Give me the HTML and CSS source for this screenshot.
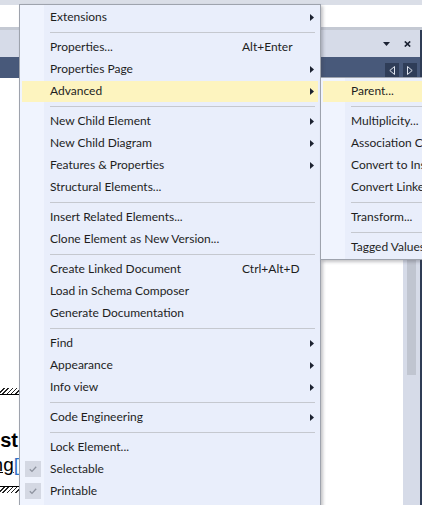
FILE: index.html
```html
<!DOCTYPE html>
<html>
<head>
<meta charset="utf-8">
<link rel="stylesheet" href="styles.css">
</head>
<body>
<div class="app">
  <div class="topband"></div>
  <div class="toolbar"></div>
  <div class="rule"></div>
  <div class="tabhead">
    <svg class="hico" width="7" height="4" viewBox="0 0 7 4"><path d="M0 0H7L3.5 4Z" fill="#1b2233"/></svg>
    <svg class="hico" width="7" height="6" viewBox="0 0 7 6"><path d="M0.8 0.5L6.2 5.5M6.2 0.5L0.8 5.5" stroke="#1b2233" stroke-width="1.7"/></svg>
  </div>
  <div class="navbar">
    <span class="nbtn"><svg width="6" height="9" viewBox="0 0 6 9"><path d="M5.5 0.5V8.5L0.8 4.5Z" fill="none" stroke="#dfe4ee" stroke-width="1"/></svg></span>
    <span class="nbtn"><svg width="6" height="9" viewBox="0 0 6 9"><path d="M0.5 0.5V8.5L5.2 4.5Z" fill="none" stroke="#dfe4ee" stroke-width="1"/></svg></span>
  </div>
  <div class="body">
    <div class="canvas">
      <div class="node">
        <div class="hatch top"></div>
        <div class="ntitle">st</div>
        <div class="nattr"><u>ng</u><span class="caret">[</span></div>
        <div class="hatch bottom"></div>
      </div>
    </div>
    <div class="vscroll"><div class="thumb"></div></div>
  </div>
</div>

<div class="menu main">
  <div class="row"><span class="ic"></span><span class="lb">Extensions</span><span class="sc"></span><svg class="ar" width="4" height="7" viewBox="0 0 4 7"><path d="M0 0L4 3.5L0 7Z"/></svg></div>
  <div class="sep"></div>
  <div class="row"><span class="ic"></span><span class="lb">Properties...</span><span class="sc">Alt+Enter</span><span></span></div>
  <div class="row"><span class="ic"></span><span class="lb">Properties Page</span><span class="sc"></span><svg class="ar" width="4" height="7" viewBox="0 0 4 7"><path d="M0 0L4 3.5L0 7Z"/></svg></div>
  <div class="row hl"><span class="ic"></span><span class="lb">Advanced</span><span class="sc"></span><svg class="ar" width="4" height="7" viewBox="0 0 4 7"><path d="M0 0L4 3.5L0 7Z"/></svg></div>
  <div class="sep"></div>
  <div class="row"><span class="ic"></span><span class="lb">New Child Element</span><span class="sc"></span><svg class="ar" width="4" height="7" viewBox="0 0 4 7"><path d="M0 0L4 3.5L0 7Z"/></svg></div>
  <div class="row"><span class="ic"></span><span class="lb">New Child Diagram</span><span class="sc"></span><svg class="ar" width="4" height="7" viewBox="0 0 4 7"><path d="M0 0L4 3.5L0 7Z"/></svg></div>
  <div class="row"><span class="ic"></span><span class="lb">Features &amp; Properties</span><span class="sc"></span><svg class="ar" width="4" height="7" viewBox="0 0 4 7"><path d="M0 0L4 3.5L0 7Z"/></svg></div>
  <div class="row"><span class="ic"></span><span class="lb">Structural Elements...</span><span class="sc"></span><span></span></div>
  <div class="sep"></div>
  <div class="row"><span class="ic"></span><span class="lb">Insert Related Elements...</span><span class="sc"></span><span></span></div>
  <div class="row"><span class="ic"></span><span class="lb">Clone Element as New Version...</span><span class="sc"></span><span></span></div>
  <div class="sep"></div>
  <div class="row"><span class="ic"></span><span class="lb">Create Linked Document</span><span class="sc">Ctrl+Alt+D</span><span></span></div>
  <div class="row"><span class="ic"></span><span class="lb">Load in Schema Composer</span><span class="sc"></span><span></span></div>
  <div class="row"><span class="ic"></span><span class="lb">Generate Documentation</span><span class="sc"></span><span></span></div>
  <div class="sep"></div>
  <div class="row"><span class="ic"></span><span class="lb">Find</span><span class="sc"></span><svg class="ar" width="4" height="7" viewBox="0 0 4 7"><path d="M0 0L4 3.5L0 7Z"/></svg></div>
  <div class="row"><span class="ic"></span><span class="lb">Appearance</span><span class="sc"></span><svg class="ar" width="4" height="7" viewBox="0 0 4 7"><path d="M0 0L4 3.5L0 7Z"/></svg></div>
  <div class="row"><span class="ic"></span><span class="lb">Info view</span><span class="sc"></span><svg class="ar" width="4" height="7" viewBox="0 0 4 7"><path d="M0 0L4 3.5L0 7Z"/></svg></div>
  <div class="sep"></div>
  <div class="row"><span class="ic"></span><span class="lb">Code Engineering</span><span class="sc"></span><svg class="ar" width="4" height="7" viewBox="0 0 4 7"><path d="M0 0L4 3.5L0 7Z"/></svg></div>
  <div class="sep"></div>
  <div class="row"><span class="ic"></span><span class="lb">Lock Element...</span><span class="sc"></span><span></span></div>
  <div class="row"><span class="ic"><span class="check"><svg width="16" height="16" viewBox="0 0 16 16"><path d="M4.8 8.2L7 10.4L11.2 5.8" fill="none" stroke="#8d929e" stroke-width="1.3"/></svg></span></span><span class="lb">Selectable</span><span class="sc"></span><span></span></div>
  <div class="row"><span class="ic"><span class="check"><svg width="16" height="16" viewBox="0 0 16 16"><path d="M4.8 8.2L7 10.4L11.2 5.8" fill="none" stroke="#8d929e" stroke-width="1.3"/></svg></span></span><span class="lb">Printable</span><span class="sc"></span><span></span></div>
</div>

<div class="menu submenu">
  <div class="row hl"><span class="ic"></span><span class="lb">Parent...</span><span class="sc"></span><span></span></div>
  <div class="sep"></div>
  <div class="row"><span class="ic"></span><span class="lb">Multiplicity...</span><span class="sc"></span><span></span></div>
  <div class="row"><span class="ic"></span><span class="lb">Association Class...</span><span class="sc"></span><span></span></div>
  <div class="row"><span class="ic"></span><span class="lb">Convert to Instance...</span><span class="sc"></span><span></span></div>
  <div class="row"><span class="ic"></span><span class="lb">Convert Linked Element...</span><span class="sc"></span><span></span></div>
  <div class="sep"></div>
  <div class="row"><span class="ic"></span><span class="lb">Transform...</span><span class="sc"></span><span></span></div>
  <div class="sep"></div>
  <div class="row"><span class="ic"></span><span class="lb">Tagged Values...</span><span class="sc"></span><span></span></div>
</div>
</body>
</html>
```

FILE: styles.css
```css
* { box-sizing: border-box; }

body {
  margin: 0;
  width: 422px;
  height: 505px;
  overflow: hidden;
  position: relative;
  background: #fff;
  font-family: Lato, "Liberation Sans", sans-serif;
  font-size: 12px;
  color: #1e1e1e;
}

.app {
  display: flex;
  flex-direction: column;
  height: 505px;
}

.topband { height: 5px; background: #dadee7; flex: none; }
.toolbar { height: 22px; background: #fff; flex: none; }
.rule { height: 3px; background: #c4c9d3; flex: none; }

.tabhead {
  flex: none;
  height: 27px;
  background: #d6dbe8;
  display: flex;
  justify-content: flex-end;
  align-items: center;
  gap: 14px;
  padding-right: 9px;
  border-right: 2px solid #2f3c55;
}
.hico { display: block; }

.navbar {
  flex: none;
  height: 21px;
  background: #48597a;
  display: flex;
  justify-content: flex-end;
  align-items: flex-end;
  gap: 4px;
  padding: 0 3px 1px 0;
  border-right: 2px solid #2f3c55;
}
.nbtn {
  width: 14px;
  height: 14px;
  background: #2f3d58;
  display: flex;
  align-items: center;
  justify-content: center;
}
.nbtn svg { display: block; }

.body {
  flex: 1;
  display: flex;
  border-right: 2px solid #2f3c55;
}
.canvas {
  flex: 1;
  position: relative;
  background: #fff;
}
.vscroll {
  width: 17px;
  background: #d6dbe8;
}
.thumb {
  margin: 182px 0 0 4px;
  width: 9px;
  height: 115px;
  background: #c0c5d0;
}

/* diagram node partly visible at left */
.node {
  position: absolute;
  top: 310px;
  left: -101px;
  width: 120px;
  font-family: "Liberation Sans", Arial, sans-serif;
  color: #000;
}
.hatch {
  height: 6px;
  background: repeating-linear-gradient(135deg, #fff 0 2px, #222 2px 3px);
}
.hatch.top { border-bottom: 1px solid #000; height: 7px; }
.hatch.bottom { border-top: 1px solid #000; height: 7px; margin-top: 11px; }
.ntitle {
  margin-top: 34px;
  font-weight: bold;
  font-size: 20px;
  line-height: 22px;
  text-align: right;
  padding-right: 1px;
}
.nattr {
  margin-top: 4px;
  font-size: 19px;
  line-height: 20px;
  text-align: right;
  white-space: nowrap;
}
.nattr u { text-decoration-thickness: 1px; }
.caret { color: #2f6fc4; text-decoration: underline; }

/* context menus */
.menu {
  position: absolute;
  border: 1px solid #9ea3ad;
  padding: 1px;
  background: linear-gradient(to right, #f0f4fe 0 24px, #e9eefb 24px);
  box-shadow: 2px 2px 3px rgba(60, 60, 70, 0.3);
}
.main {
  left: 19px;
  top: 4px;
  width: 302px;
  padding-bottom: 6px;
}
.submenu {
  left: 320px;
  top: 77px;
  width: 150px;
  padding-top: 2px;
}

.row {
  height: 22px;
  margin: 0 1px;
  padding-right: 4px;
  display: grid;
  grid-template-columns: 28px 192px 1fr 4px;
  align-items: center;
  white-space: nowrap;
}
.submenu .row { grid-template-columns: 28px 1fr 0 0; }
.row.hl {
  background: linear-gradient(#fdf4bf, #fdf4bf) 0 1px / 100% 21px no-repeat;
}
.lb { line-height: 14px; }
.sc { line-height: 14px; }
.ar { display: block; fill: #1c2230; }

.check {
  display: block;
  width: 16px;
  height: 16px;
  margin-left: 3px;
  background: #d4d8e3;
}
.check svg { display: block; }

.sep {
  height: 1px;
  margin: 4px 4px 3px 29px;
  background: #c5c8cf;
}
```
